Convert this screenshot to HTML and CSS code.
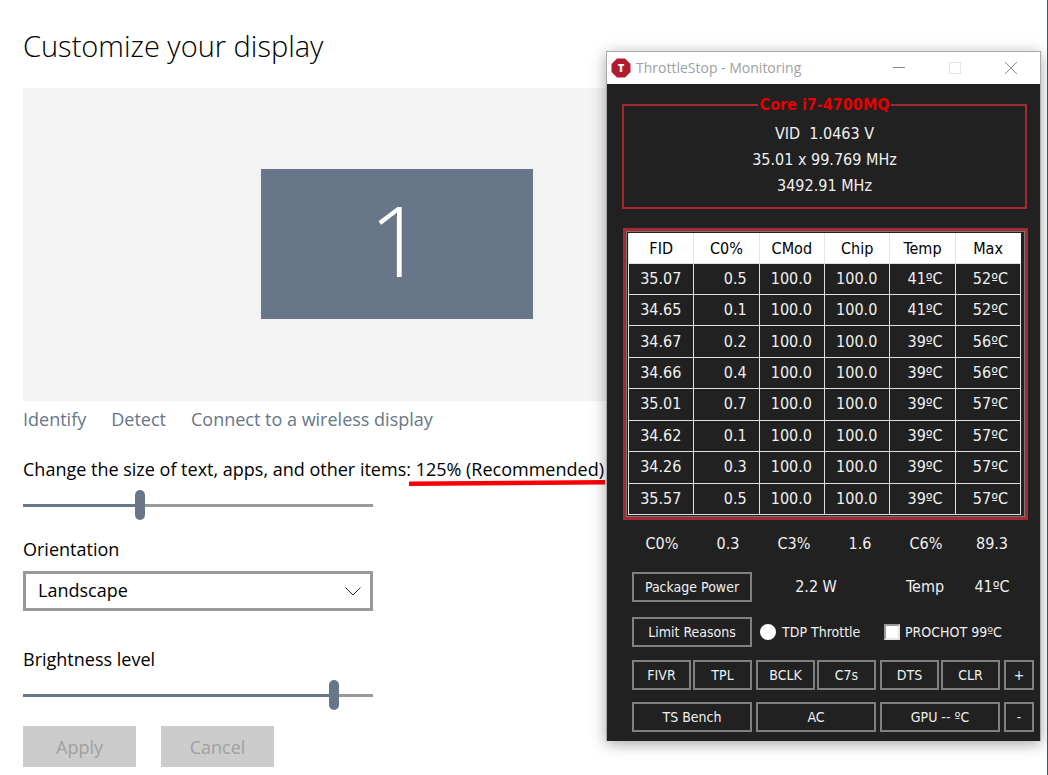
FILE: index.html
```
<!DOCTYPE html>
<html lang="en">
<head>
    <meta charset="UTF-8">
    <meta name="viewport" content="width=device-width, initial-scale=1.0">
    <title>Customize your display</title>
    <link rel="stylesheet" href="styles.css">
</head>
<body>

    <main class="settings">
        <h1>Customize your display</h1>

        <div class="preview">
            <div class="monitor">1</div>
        </div>

        <nav class="links">
            <a href="#">Identify</a>
            <a href="#">Detect</a>
            <a href="#">Connect to a wireless display</a>
        </nav>

        <form class="display-form">
            <label for="scale">Change the size of text, apps, and other items: <span class="marked">125% (Recommended)<svg class="red-line" viewBox="0 0 194 6" preserveAspectRatio="none"><path d="M0 1.5L194 0V4.5L0 6Z" fill="#f90007"/></svg></span></label>
            <input type="range" class="slider scale" id="scale" min="0" max="100" value="33">

            <label for="orientation">Orientation</label>
            <div class="select-box">
                <select id="orientation">
                    <option>Landscape</option>
                </select>
                <svg class="chevron" width="16" height="9" viewBox="0 0 16 9"><path d="M.5 .5L8 8L15.5 .5" fill="none" stroke="#333"/></svg>
            </div>

            <label for="brightness">Brightness level</label>
            <input type="range" class="slider brightness" id="brightness" min="0" max="100" value="90">

            <div class="actions">
                <button type="button" disabled>Apply</button>
                <button type="button" disabled>Cancel</button>
            </div>
        </form>
    </main>

    <section class="window">
        <header class="titlebar">
            <svg width="20" height="20" viewBox="0 0 20 20">
                <path d="M6 .5H14L19.5 6V14L14 19.5H6L.5 14V6Z" fill="#b01c2e"/>
                <text x="10" y="14" text-anchor="middle" class="logo-letter">T</text>
            </svg>
            <h2>ThrottleStop - Monitoring</h2>
            <button type="button" aria-label="Minimize"><svg width="14" height="14" viewBox="0 0 14 14"><path d="M1 6.5H13" stroke="#888"/></svg></button>
            <button type="button" aria-label="Maximize" disabled><svg width="14" height="14" viewBox="0 0 14 14"><path d="M1.5 1.5H12.5V12.5H1.5Z" fill="none" stroke="#e2e2e2"/></svg></button>
            <button type="button" aria-label="Close"><svg width="14" height="14" viewBox="0 0 14 14"><path d="M1 1L13 13M13 1L1 13" stroke="#888"/></svg></button>
        </header>

        <div class="panel">
            <fieldset class="cpu">
                <legend>Core i7-4700MQ</legend>
                <p>VID&nbsp; 1.0463 V</p>
                <p>35.01 x 99.769 MHz</p>
                <p>3492.91 MHz</p>
            </fieldset>

            <div class="grid-frame">
                <table>
                    <thead>
                        <tr><th>FID</th><th>C0%</th><th>CMod</th><th>Chip</th><th>Temp</th><th>Max</th></tr>
                    </thead>
                    <tbody>
                        <tr><td>35.07</td><td>0.5</td><td>100.0</td><td>100.0</td><td>41ºC</td><td>52ºC</td></tr>
                        <tr><td>34.65</td><td>0.1</td><td>100.0</td><td>100.0</td><td>41ºC</td><td>52ºC</td></tr>
                        <tr><td>34.67</td><td>0.2</td><td>100.0</td><td>100.0</td><td>39ºC</td><td>56ºC</td></tr>
                        <tr><td>34.66</td><td>0.4</td><td>100.0</td><td>100.0</td><td>39ºC</td><td>56ºC</td></tr>
                        <tr><td>35.01</td><td>0.7</td><td>100.0</td><td>100.0</td><td>39ºC</td><td>57ºC</td></tr>
                        <tr><td>34.62</td><td>0.1</td><td>100.0</td><td>100.0</td><td>39ºC</td><td>57ºC</td></tr>
                        <tr><td>34.26</td><td>0.3</td><td>100.0</td><td>100.0</td><td>39ºC</td><td>57ºC</td></tr>
                        <tr><td>35.57</td><td>0.5</td><td>100.0</td><td>100.0</td><td>39ºC</td><td>57ºC</td></tr>
                    </tbody>
                </table>
            </div>

            <div class="cstates">
                <span>C0%</span><span>0.3</span>
                <span>C3%</span><span>1.6</span>
                <span>C6%</span><span>89.3</span>
            </div>

            <div class="row power">
                <button type="button">Package Power</button>
                <span>2.2 W</span>
                <span>Temp</span>
                <span>41ºC</span>
            </div>

            <div class="row limits">
                <button type="button">Limit Reasons</button>
                <label><input type="radio" name="tdp">TDP Throttle</label>
                <label><input type="checkbox" name="prochot">PROCHOT 99ºC</label>
            </div>

            <div class="row">
                <div class="pair">
                    <button type="button">FIVR</button>
                    <button type="button">TPL</button>
                </div>
                <div class="pair">
                    <button type="button">BCLK</button>
                    <button type="button">C7s</button>
                </div>
                <div class="pair">
                    <button type="button">DTS</button>
                    <button type="button">CLR</button>
                </div>
                <button type="button">+</button>
            </div>

            <div class="row">
                <button type="button">TS Bench</button>
                <button type="button">AC</button>
                <button type="button">GPU -- ºC</button>
                <button type="button">-</button>
            </div>
        </div>
    </section>

</body>
</html>
```
FILE: styles.css
```
* {
    margin: 0;
    padding: 0;
    box-sizing: border-box;
}

body {
    font-family: "Open Sans", "Noto Sans", sans-serif;
    font-size: 18px;
    line-height: 24px;
    color: #000;
    background-color: #fff;
    min-height: 100vh;
    position: relative;
    border-right: 1px solid #2c5878;
}

button,
input,
select {
    font: inherit;
    color: inherit;
}

/* Display settings page */
.settings {
    padding: 24px 24px 8px 23px;
}

h1 {
    font-size: 29px;
    font-weight: 300;
    line-height: 44px;
    margin-bottom: 20px;
}

.preview {
    display: flex;
    justify-content: center;
    align-items: center;
    max-width: 748px;
    height: 313px;
    padding-bottom: 2px;
    background-color: #f3f3f3;
}

.monitor {
    width: 272px;
    height: 150px;
    background-color: #677689;
    color: #fff;
    font-size: 98px;
    font-weight: 300;
    line-height: 140px;
    text-align: center;
}

.links {
    display: flex;
    gap: 25px;
    margin-top: 6px;
}

.links a {
    color: #677689;
    text-decoration: none;
}

.display-form {
    margin-top: 26px;
    width: 350px;
}

.display-form label {
    display: block;
    white-space: nowrap;
}

.marked {
    position: relative;
}

/* hand-drawn red underline */
.red-line {
    position: absolute;
    left: -7px;
    top: 23px;
    width: calc(100% + 8px);
    height: 6px;
}

.slider {
    -webkit-appearance: none;
    appearance: none;
    display: block;
    width: 100%;
    height: 30px;
    margin: 9px 0 17px;
    background: none;
}

.slider::-webkit-slider-runnable-track {
    height: 3px;
    background: linear-gradient(to right, #677689 var(--fill), #999 var(--fill));
}

.slider::-webkit-slider-thumb {
    -webkit-appearance: none;
    width: 10px;
    height: 30px;
    margin-top: -14px;
    border-radius: 5px;
    background-color: #677689;
}

.scale {
    --fill: 33%;
}

.brightness {
    --fill: 90%;
    margin-bottom: 16px;
}

.select-box {
    position: relative;
    margin: 10px 0 36px;
}

.select-box select {
    -webkit-appearance: none;
    appearance: none;
    display: block;
    width: 100%;
    height: 40px;
    padding: 0 40px 2px 12px;
    border: 3px solid #999;
    border-radius: 0;
    background-color: #fff;
}

.chevron {
    position: absolute;
    right: 12px;
    top: 16px;
    pointer-events: none;
}

.actions {
    display: flex;
    gap: 25px;
}

.actions button {
    width: 113px;
    height: 41px;
    border: none;
    background-color: #ccc;
    color: #a0a0a0;
}

/* ThrottleStop window */
.window {
    position: absolute;
    top: 51px;
    right: 6px;
    width: 435px;
    border: 1px solid #aaa;
    border-bottom: none;
    background-color: #fff;
    box-shadow: 0 3px 14px rgba(0, 0, 0, 0.35);
    font-family: "DejaVu Sans Condensed", "DejaVu Sans", sans-serif;
    font-size: 16px;
    line-height: 26px;
    color: #f0f0f0;
}

.titlebar {
    display: flex;
    align-items: center;
    height: 32px;
    padding: 0 1px 0 4px;
    background-color: #fff;
}

.logo-letter {
    font-family: "Open Sans", sans-serif;
    font-size: 11px;
    font-weight: 800;
    fill: #fff;
}

.titlebar h2 {
    flex: 1;
    margin-left: 5px;
    font-family: "Open Sans", "Noto Sans", sans-serif;
    font-size: 14px;
    font-weight: 400;
    color: #a0a0a0;
}

.titlebar button {
    display: flex;
    justify-content: center;
    align-items: center;
    width: 56px;
    height: 30px;
    border: none;
    background: none;
}

.panel {
    padding: 10px 6px 9px 15px;
    background-color: #212121;
}

.cpu {
    height: 115px;
    margin-right: 7px;
    padding-top: 5px;
    border: 2px solid #a32a31;
    text-align: center;
}

.cpu legend {
    margin: 0 auto;
    padding: 0 2px;
    line-height: 22px;
    font-weight: bold;
    color: #e60000;
}

.grid-frame {
    margin: 19px 6px 0 1px;
    padding: 2px 4px 2px 2px;
    border: 3px solid #a32a31;
    outline: 1px solid #777;
    outline-offset: -4px;
}

table {
    width: 100%;
    height: 282px;
    border-collapse: collapse;
    table-layout: fixed;
}

th {
    height: 30px;
    padding-top: 2px;
    background-color: #fff;
    color: #000;
    font-weight: normal;
    border-left: 1px solid #e4e4e4;
}

td {
    border: 1px solid #e0e0e0;
    text-align: right;
    padding-right: 12px;
    line-height: 24px;
}

.cstates {
    display: grid;
    grid-template-columns: repeat(6, 66px);
    margin: 11px 0 15px 7px;
    text-align: center;
}

.row {
    display: grid;
    grid-template-columns: 120px 120px 120px 30px;
    align-items: center;
    column-gap: 4px;
    padding-left: 10px;
    margin-top: 12px;
}

.row button {
    height: 30px;
    border: 2px solid #808080;
    background-color: #212121;
    font-size: 14px;
    line-height: 24px;
}

.pair {
    display: grid;
    grid-template-columns: 1fr 1fr;
    gap: 2px;
}

.power {
    grid-template-columns: 120px 120px 90px 36px;
    text-align: center;
    white-space: nowrap;
}

.limits {
    grid-template-columns: 120px 120px 150px;
    margin-top: 15px;
    margin-bottom: 13px;
}

.limits label {
    display: flex;
    align-items: center;
    font-size: 14px;
    white-space: nowrap;
}

.limits input {
    -webkit-appearance: none;
    appearance: none;
    width: 16px;
    height: 16px;
    background-color: #fff;
}

.limits input[type="radio"] {
    margin: 0 6px 0 4px;
    border-radius: 50%;
}

.limits input[type="checkbox"] {
    margin: 0 5px 0 4px;
    border: 2px solid #e4e4e4;
    border-top-color: #999;
    border-left-color: #999;
}
```
